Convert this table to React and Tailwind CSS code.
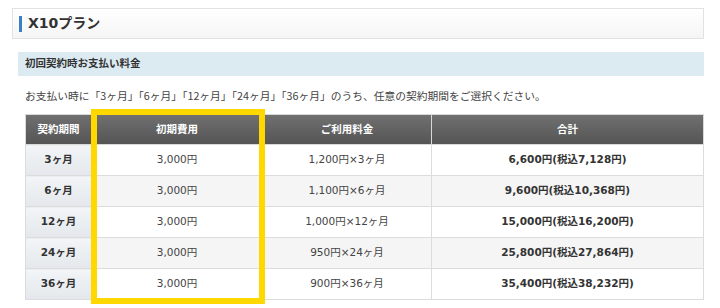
import React from 'react';

const rows = [
  { term: '3ヶ月', init: '3,000円', monthly: '1,200円×3ヶ月', total: '6,600円(税込7,128円)' },
  { term: '6ヶ月', init: '3,000円', monthly: '1,100円×6ヶ月', total: '9,600円(税込10,368円)' },
  { term: '12ヶ月', init: '3,000円', monthly: '1,000円×12ヶ月', total: '15,000円(税込16,200円)' },
  { term: '24ヶ月', init: '3,000円', monthly: '950円×24ヶ月', total: '25,800円(税込27,864円)' },
  { term: '36ヶ月', init: '3,000円', monthly: '900円×36ヶ月', total: '35,400円(税込38,232円)' },
];

const font = { fontFamily: '"DejaVu Sans", "Noto Sans CJK JP", sans-serif' };
const jpFont = { fontFamily: '"Noto Sans CJK JP", "DejaVu Sans", sans-serif' };

const App = () => {
  return (
    <div className="w-[720px] h-[308px] overflow-hidden bg-white text-[#444]" style={font}>
      <div className="pt-[8px] px-[12px] pr-[16px]">
        <div className="h-[31px] border border-[#e2e2e2] bg-gradient-to-b from-white to-[#f5f5f5] flex items-center pl-[6px]">
          <span className="w-[3px] h-[16px] bg-[#3b7fc4] mr-[6px]" />
          <h1 className="text-[14px] font-bold text-[#333]">X10プラン</h1>
        </div>
      </div>

      <div className="ml-[18px] mr-[16px] mt-[13px] h-[24px] bg-[#dceaf2] flex items-center pl-[7px]">
        <h2 className="text-[10.5px] font-bold text-[#333]">初回契約時お支払い料金</h2>
      </div>

      <p className="ml-[25px] mt-[12px] text-[10.75px] leading-[16px] text-[#444]" style={jpFont}>
        お支払い時に「3ヶ月」「6ヶ月」「12ヶ月」「24ヶ月」「36ヶ月」のうち、任意の契約期間をご選択ください。
      </p>

      <div className="relative ml-[25px] mt-[10px] w-[679px]">
        <table className="w-full border-collapse text-[10.5px]">
          <thead>
            <tr className="h-[30px] bg-gradient-to-b from-[#707070] to-[#545454] text-white font-bold">
              <th className="w-[66px] border border-[#d9d9d9] font-bold">契約期間</th>
              <th className="w-[171px] border border-[#d9d9d9] font-bold">初期費用</th>
              <th className="w-[169px] border border-[#d9d9d9] font-bold">ご利用料金</th>
              <th className="border border-[#d9d9d9] font-bold">合計</th>
            </tr>
          </thead>
          <tbody>
            {rows.map((r, i) => (
              <tr key={r.term} className={i % 2 ? 'h-[31px] bg-[#f5f5f5]' : 'h-[31px] bg-white'}>
                <td className="border border-[#dcdcdc] bg-gradient-to-b from-[#f3f5f7] to-[#e4e8ec] text-center font-bold text-[#333]">{r.term}</td>
                <td className="border border-[#dcdcdc] text-center">{r.init}</td>
                <td className="border border-[#dcdcdc] text-center">{r.monthly}</td>
                <td className="border border-[#dcdcdc] text-center font-bold text-[#333]">{r.total}</td>
              </tr>
            ))}
          </tbody>
        </table>
        <div className="absolute left-[66px] top-[-5px] w-[174px] h-[195px] border-[6px] border-[#ffd800]" />
        <p className="mt-[6px] text-[10.5px] leading-[14px] text-[#555]" style={jpFont}>※表示料金はすべて税抜価格です。別途消費税がかかります。</p>
      </div>
    </div>
  );
};

export default App;
